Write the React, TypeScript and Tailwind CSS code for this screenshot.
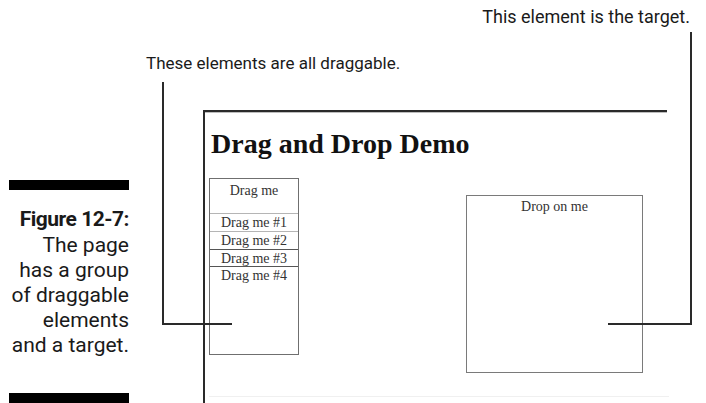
const items = ['Drag me #1', 'Drag me #2', 'Drag me #3', 'Drag me #4']

export default function App() {
  return (
    <div className="relative h-[403px] w-[706px] overflow-hidden bg-white text-[#1a1a1a] font-['Roboto','Liberation_Sans',sans-serif]">
      {/* callouts */}
      <p className="pt-[6px] pr-[16px] text-right text-[18px] leading-[21px]">This element is the target.</p>
      <p className="mt-[26px] pl-[146px] text-[17px] leading-[20px]">These elements are all draggable.</p>

      <div className="mt-[37px] flex">
        {/* figure caption */}
        <div className="w-[129px] shrink-0 pt-[70px] pl-[9px]">
          <div className="h-[10px] bg-black" />
          <div className="mt-[17px] text-right text-[21px] leading-[25px]">
            <div className="mb-[1px] font-bold tracking-[-0.5px]">Figure 12-7:</div>
            <div>The page</div>
            <div>has a group</div>
            <div>of draggable</div>
            <div>elements</div>
            <div>and a target.</div>
          </div>
          <div className="mt-[35px] h-[10px] bg-black" />
        </div>

        {/* screenshot of the demo page */}
        <div className="ml-[74px] h-[300px] w-[464px] border-l-2 border-t-2 border-[#2a2a2a] pl-[4px] font-['Liberation_Serif','Times_New_Roman',serif] shadow-[inset_0_1px_0_#bdbdbd]">
          <h1 className="mt-[18px] pl-[2px] text-[28px] font-bold leading-[28px] text-[#111]">Drag and Drop Demo</h1>
          <div className="mt-[20px] flex items-start">
            <div className="flex h-[177px] w-[90px] flex-col border border-[#6f6f6f] text-center text-[14px] text-[#333]">
              <div className="h-[35px] border-b border-[#b5b5b5] pt-[3px] leading-[17px]">Drag me</div>
              <div className="h-[18px] border-b border-[#b5b5b5] leading-[17px]">{items[0]}</div>
              <div className="h-[18px] border-b border-[#555] leading-[17px]">{items[1]}</div>
              <div className="h-[17px] border-b border-[#555] leading-[17px]">{items[2]}</div>
              <div className="leading-[17px]">{items[3]}</div>
            </div>
            <div className="ml-[167px] mt-[17px] h-[178px] w-[177px] border border-[#7a7a7a] text-center text-[14px] leading-[17px] text-[#333]">
              <div className="pt-[2px]">Drop on me</div>
            </div>
          </div>
          <div className="mt-[23px] h-px w-[460px] bg-[#f0f0f0]" />
        </div>
      </div>

      {/* leader lines */}
      <div className="absolute left-[162px] top-[82px] h-[243px] w-[2px] bg-[#2a2a2a]" />
      <div className="absolute left-[162px] top-[323px] h-[2px] w-[70px] bg-[#2a2a2a]" />
      <div className="absolute left-[690px] top-[32px] h-[293px] w-[2px] bg-[#2a2a2a]" />
      <div className="absolute left-[608px] top-[323px] h-[2px] w-[84px] bg-[#2a2a2a]" />
    </div>
  )
}
